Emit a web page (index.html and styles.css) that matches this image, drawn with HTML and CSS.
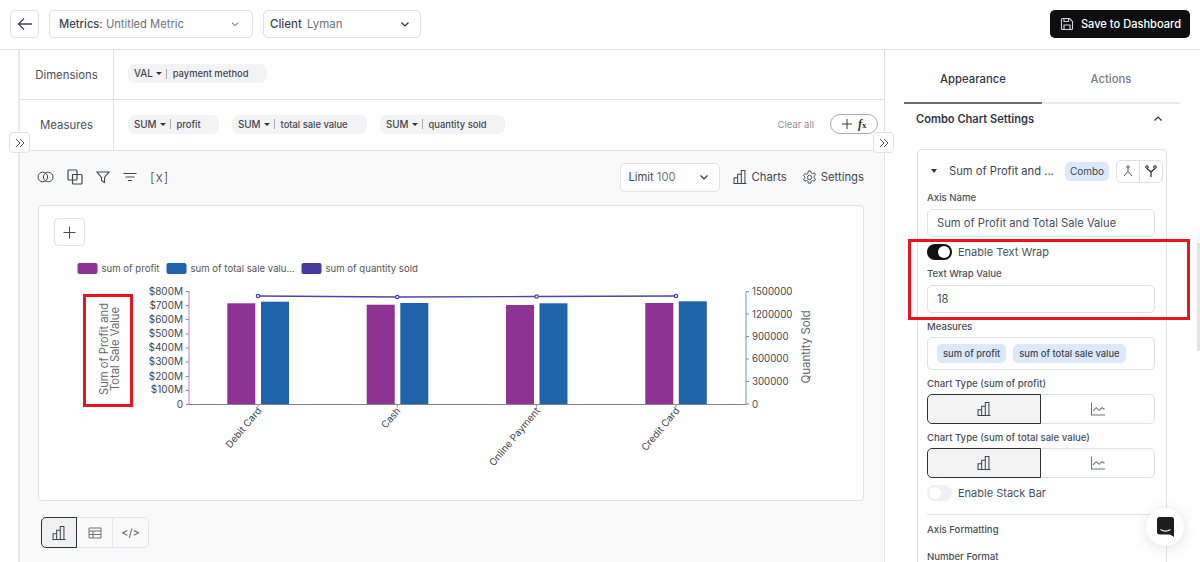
FILE: index.html
```html
<!DOCTYPE html>
<html lang="en">
<head>
<meta charset="utf-8">
<title>Metric editor</title>
<link rel="stylesheet" href="styles.css">
</head>
<body>
<svg class="sprite" width="0" height="0" aria-hidden="true">
  <symbol id="bars" viewBox="1.500 1.500 13.500 13.500"><path d="M2 14.500h12.500M2.500 14.500V9h3.500v5.500M6 14.500V5.500h3.500v9M9.500 14.500V2h3.500v12.500" fill="none" stroke="currentColor" stroke-width="1"/></symbol>
  <symbol id="line" viewBox="1.500 1.500 13.500 13.500"><path d="M2 2v12h13M3.500 10l3-3 3 2.500 2.500-2.500 2.500 1.500" fill="none" stroke="currentColor" stroke-width="1"/></symbol>
  <symbol id="dbl" viewBox="0 0 12 12"><path d="M2 2l4 4-4 4M6 2l4 4-4 4" fill="none" stroke="currentColor" stroke-width="1"/></symbol>
  <symbol id="chev" viewBox="0 0 12 12"><path d="M2.500 4.500L6 8l3.500-3.500" fill="none" stroke="currentColor" stroke-width="1.200"/></symbol>
</svg>

<header class="topbar">
  <button class="btn-back"><svg width="16" height="14" viewBox="0 0 16 14"><path d="M15 7H1.500M7 1.500L1.500 7 7 12.500" fill="none" stroke="#3f4652" stroke-width="1.300"/></svg></button>
  <div class="select select-metric"><span><b>Metrics:</b> <i>Untitled Metric</i></span><svg class="chev-sm"><use href="#chev"/></svg></div>
  <div class="select select-client"><span><b>Client</b> <i>Lyman</i></span><svg class="chev-md"><use href="#chev"/></svg></div>
  <button class="btn-save"><svg width="14" height="14" viewBox="0 0 14 14"><path d="M1.500 2.500a1 1 0 0 1 1-1h7l3 3v7a1 1 0 0 1-1 1h-9a1 1 0 0 1-1-1zM4 12.500V8h6v4.500M4 1.500v3h4.500v-3" fill="none" stroke="#d6d6d6" stroke-width="1.100"/></svg>Save to Dashboard</button>
</header>

<main class="layout">
  <section class="editor">
    <div class="shelf shelf-dim">
      <div class="shelf-label">Dimensions</div>
      <div class="shelf-body">
        <span class="pill pill-dim"><b>VAL</b><em></em><u></u>payment method</span>
      </div>
    </div>
    <div class="shelf shelf-mea">
      <div class="shelf-label">Measures</div>
      <div class="shelf-body">
        <span class="pill pill-a"><b>SUM</b><em></em><u></u>profit</span>
        <span class="pill pill-b"><b>SUM</b><em></em><u></u>total sale value</span>
        <span class="pill pill-c"><b>SUM</b><em></em><u></u>quantity sold</span>
        <span class="clear">Clear all</span>
        <span class="fx"><svg width="12" height="12" viewBox="0 0 12 12"><path d="M6 1v10M1 6h10" stroke="#444" stroke-width="1.100"/></svg><span class="fx-t">f<small>x</small></span></span>
      </div>
    </div>

    <div class="workspace">
      <div class="tools">
        <div class="tool-icons">
          <svg width="17" height="12" viewBox="0 0 17 12"><circle cx="5.800" cy="6" r="4.800" fill="none" stroke="#3f4652"/><circle cx="11.200" cy="6" r="4.800" fill="none" stroke="#3f4652"/></svg>
          <svg width="16" height="16" viewBox="0 0 16 16"><path d="M1 2a1 1 0 0 1 1-1h7a1 1 0 0 1 1 1v8a1 1 0 0 1-1 1H2a1 1 0 0 1-1-1zM5.500 5.500H14a1 1 0 0 1 1 1V14a1 1 0 0 1-1 1H6.500a1 1 0 0 1-1-1z" fill="none" stroke="#3f4652" stroke-width="1.200"/></svg>
          <svg width="14" height="13" viewBox="0 0 14 13"><path d="M1 1h12L8.500 6.500V11.500L5.500 9.500V6.500z" fill="none" stroke="#3f4652" stroke-width="1.100"/></svg>
          <svg width="14" height="10" viewBox="0 0 14 10"><path d="M.5 1.500h13M2.500 5h9M5 8.500h4" stroke="#3f4652" stroke-width="1"/></svg>
          <span class="var">[x]</span>
        </div>
        <div class="tool-right">
          <div class="limit"><span>Limit <i>100</i></span><svg class="chev-md"><use href="#chev"/></svg></div>
          <span class="tool-link"><svg class="ic14"><use href="#bars"/></svg>Charts</span>
          <span class="tool-link"><svg width="15" height="15" viewBox="0 0 16 16"><path d="M6.700 1h2.600l.4 2 1.500.8 1.900-.7 1.300 2.300-1.500 1.300v1.600l1.500 1.300-1.300 2.300-1.900-.7-1.500.8-.4 2H6.700l-.4-2-1.500-.8-1.900.7-1.300-2.300 1.500-1.300V7.400L1.600 6.100l1.300-2.300 1.900.7 1.500-.8z" fill="none" stroke="#3f4652" stroke-width="1"/><circle cx="8" cy="8" r="2.300" fill="none" stroke="#3f4652"/></svg>Settings</span>
        </div>
      </div>

      <div class="chart-card">
        <button class="btn-add"><svg width="13" height="13" viewBox="0 0 13 13"><path d="M6.500 .5v12M.5 6.500h12" stroke="#4a505a" stroke-width="1.100"/></svg></button>
        <svg class="chart" viewBox="39 206 824 293" width="824" height="293">
          <g class="legend">
            <rect x="77.500" y="263" width="20" height="11" rx="2" fill="#8e3394"/><text x="101.500" y="272">sum of profit</text>
            <rect x="166.500" y="263" width="20" height="11" rx="2" fill="#1f63ab"/><text x="190.500" y="272">sum of total sale valu...</text>
            <rect x="301.500" y="263" width="20" height="11" rx="2" fill="#463a9f"/><text x="325.500" y="272">sum of quantity sold</text>
          </g>
          <g class="ticks-l">
            <text x="183" y="294.500">$800M</text><text x="183" y="308.500">$700M</text><text x="183" y="322.500">$600M</text><text x="183" y="337">$500M</text><text x="183" y="351">$400M</text><text x="183" y="365">$300M</text><text x="183" y="379.500">$200M</text><text x="183" y="393">$100M</text><text x="183" y="407.500">0</text>
          </g>
          <path d="M186 291.500h3M186 305.500h3M186 319.500h3M186 334h3M186 348h3M186 362h3M186 376.500h3M186 390.500h3M186 404.500h3" stroke="#a768ac" stroke-width="1"/>
          <path d="M189 291v114" stroke="#c79aca" stroke-width="1.200"/>
          <g fill="#8e3394"><rect x="227.300" y="303.300" width="28" height="101"/><rect x="366.700" y="304.700" width="28" height="99.600"/><rect x="506" y="305" width="28" height="99.300"/><rect x="645.300" y="303" width="28" height="101.300"/></g>
          <g fill="#1f63ab"><rect x="261" y="301.700" width="28" height="102.600"/><rect x="400.300" y="303" width="28" height="101.300"/><rect x="539.500" y="303.300" width="28" height="101"/><rect x="678.800" y="301.300" width="28" height="103"/></g>
          <path d="M189 404.500h557" stroke="#85808f" stroke-width="1"/>
          <path d="M258 404.500v3M397.300 404.500v3M536.500 404.500v3M676 404.500v3" stroke="#999" stroke-width="1"/>
          <path d="M258 296l139.300 1 139.300-.5L676 296" fill="none" stroke="#4f45a5" stroke-width="1.400"/>
          <g fill="#fff" stroke="#463a9f" stroke-width="1.200"><circle cx="258" cy="296" r="1.700"/><circle cx="397.300" cy="297" r="1.700"/><circle cx="536.600" cy="296.500" r="1.700"/><circle cx="676" cy="296" r="1.700"/></g>
          <path d="M746 291.500v113" stroke="#87aacb" stroke-width="1.200"/>
          <path d="M746 291.700h3M746 314h3M746 336.500h3M746 359h3M746 381.500h3M746 404h3" stroke="#5f90bf" stroke-width="1"/>
          <g class="ticks-r">
            <text x="752" y="295">1500000</text><text x="752" y="317.500">1200000</text><text x="752" y="340">900000</text><text x="752" y="362">600000</text><text x="752" y="385">300000</text><text x="752" y="407.500">0</text>
          </g>
          <g class="cats">
            <text transform="translate(262 411) rotate(-50)">Debit Card</text>
            <text transform="translate(401 411) rotate(-50)">Cash</text>
            <text transform="translate(540.500 411) rotate(-50)">Online Payment</text>
            <text transform="translate(680 411) rotate(-50)">Credit Card</text>
          </g>
          <g class="axis-title">
            <text transform="translate(107.500 349) rotate(-90)">Sum of Profit and</text>
            <text transform="translate(118.500 349) rotate(-90)">Total Sale Value</text>
            <text class="qty" transform="translate(810 347) rotate(-90)">Quantity Sold</text>
          </g>
        </svg>
      </div>

      <div class="viewtabs">
        <span class="vt vt-on"><svg class="ic14"><use href="#bars"/></svg></span>
        <span class="vt"><svg width="14" height="12" viewBox="0 0 14 12"><path d="M1 1h12v10H1zM1 4h12M1 7.500h12M5 4v7" fill="none" stroke="#6d727b"/></svg></span>
        <span class="vt vt-code">&lt;/&gt;</span>
      </div>
    </div>
  </section>

  <aside class="panel">
    <div class="tabs"><span class="tab tab-on">Appearance</span><span class="tab">Actions</span></div>
    <div class="sec-head"><span>Combo Chart Settings</span><svg class="chev-up"><use href="#chev"/></svg></div>
    <div class="series">
      <div class="series-head">
        <em class="caret"></em>
        <span class="series-name">Sum of Profit and ...</span>
        <span class="badge">Combo</span>
        <span class="axis-btns">
          <span><svg width="12" height="12" viewBox="0 0 12 12"><circle cx="6" cy="2" r="1.200" fill="none" stroke="#555"/><path d="M6 3.500v3M6 6.500L2 11M6 6.500l4 4.500" fill="none" stroke="#555"/></svg></span>
          <span><svg width="12" height="12" viewBox="0 0 12 12"><circle cx="2" cy="2" r="1.300" fill="none" stroke="#222"/><circle cx="10" cy="2" r="1.300" fill="none" stroke="#222"/><path d="M2 3.500L6 7l4-3.500M6 7v5" fill="none" stroke="#222" stroke-width="1.200"/></svg></span>
        </span>
      </div>
      <label class="lbl lbl-axis">Axis Name</label>
      <div class="input">Sum of Profit and Total Sale Value</div>
      <div class="toggle-row tr-wrap"><span class="toggle on"></span>Enable Text Wrap</div>
      <label class="lbl lbl-wrap">Text Wrap Value</label>
      <div class="input">18</div>
      <label class="lbl lbl-mea">Measures</label>
      <div class="chips"><span class="chip">sum of profit</span><span class="chip">sum of total sale value</span></div>
      <label class="lbl lbl-ct1">Chart Type (sum of profit)</label>
      <div class="seg"><span class="seg-on"><svg class="ic14"><use href="#bars"/></svg></span><span><svg class="ic14 dim"><use href="#line"/></svg></span></div>
      <label class="lbl lbl-ct2">Chart Type (sum of total sale value)</label>
      <div class="seg"><span class="seg-on"><svg class="ic14"><use href="#bars"/></svg></span><span><svg class="ic14 dim"><use href="#line"/></svg></span></div>
      <div class="toggle-row tr-stack"><span class="toggle"></span>Enable Stack Bar</div>
      <hr class="rule">
      <div class="lbl-strong lbl-fmt">Axis Formatting</div>
      <div class="lbl-strong lbl-num">Number Format</div>
    </div>
  </aside>
</main>

<button class="collapse collapse-l"><svg width="12" height="12"><use href="#dbl"/></svg></button>
<button class="collapse collapse-r"><svg width="12" height="12"><use href="#dbl"/></svg></button>
<div class="mark mark-axis"></div>
<div class="mark mark-wrap"></div>
<div class="scroll-thumb"></div>
<button class="chat"><svg width="17" height="20" viewBox="0 0 17 20"><path d="M2.500 0h12A2.500 2.500 0 0 1 17 2.500V20l-4-2.500H2.500A2.500 2.500 0 0 1 0 15V2.500A2.500 2.500 0 0 1 2.500 0z" fill="#1d1d1f"/><path d="M3.500 12.500c3 2 7 2 10 0" fill="none" stroke="#fff" stroke-width="1.100"/></svg></button>
</body>
</html>
```
FILE: styles.css
```css
* { box-sizing: border-box; }
html, body { margin: 0; height: 562px; overflow: hidden; }
body { position: relative; background: #fff; font-family: Inter, "Liberation Sans", sans-serif; color: #3f4652; font-size: 12px; }
button { font: inherit; padding: 0; cursor: pointer; }
i, em { font-style: normal; }
.sprite { position: absolute; }

/* top bar */
.topbar { height: 50px; display: flex; align-items: center; gap: 10px; padding: 0 10px 1px 10px; border-bottom: 1px solid #dfe1e5; }
.btn-back { width: 29px; height: 28px; background: #fff; border: 1px solid #dfe1e5; border-radius: 5px; display: flex; align-items: center; justify-content: center; }
.select { height: 28px; display: flex; align-items: center; justify-content: space-between; background: #fff; border: 1px solid #dfe1e5; border-radius: 5px; font-size: 11.500px; }
.select b { font-weight: 500; color: #3f4652; }
.select i { color: #6d727b; }
.select-metric { width: 204px; padding: 0 10px 0 9px; }
.select-metric span { font-size: 11.200px; }
.select-client { width: 158px; padding: 0 9px 0 6px; }
.select-client b { margin-right: 2px; }
.chev-sm { width: 10px; height: 10px; color: #444; margin-right: 2px; }
.chev-md { width: 12px; height: 12px; color: #333; }
.btn-save { margin-left: auto; width: 140px; height: 28px; background: #0e0e10; border: 0; border-radius: 5px; color: #fff; font-weight: 500; font-size: 11.100px; display: flex; align-items: center; justify-content: flex-end; padding-right: 9px; gap: 7px; white-space: nowrap; }

/* layout */
.layout { height: 512px; display: flex; }
.editor { width: 867px; margin-left: 18px; border-left: 2px solid #e6e7ea; border-right: 1px solid #dfe1e5; display: flex; flex-direction: column; }
.shelf { display: flex; border-bottom: 1px solid #dfe1e5; }
.shelf-dim { height: 50px; }
.shelf-mea { height: 51px; }
.shelf-label { width: 94px; border-right: 1px solid #dfe1e5; display: flex; align-items: center; justify-content: center; font-size: 11.400px; color: #4a505a; }
.shelf-body { flex: 1; display: flex; align-items: center; padding: 0 6px 2px 14px; }
.pill { height: 19px; border-radius: 7px; background: #f3f3f5; display: inline-flex; align-items: center; padding-left: 6px; font-size: 9.400px; font-weight: 500; color: #3f4652; margin-right: 13px; white-space: nowrap; }
.pill b { font-weight: 500; font-size: 9.800px; }
.pill em { width: 0; height: 0; border: 3px solid transparent; border-top: 3px solid #333; border-bottom: 0; margin: 0 4px 0 3px; }
.pill u { width: 1px; height: 10px; background: #aaa; margin-right: 6px; }
.pill-dim { width: 139px; }
.pill-a { width: 91px; }
.pill-b { width: 135px; }
.pill-c { width: 125px; }
.clear { margin-left: auto; color: #8d9097; font-size: 9.500px; margin-right: 16px; }
.fx { width: 48px; height: 20px; border: 1px solid #a9acb2; border-radius: 10px; display: inline-flex; align-items: center; gap: 5px; padding-left: 10px; }
.fx-t { font: italic 700 12px "Liberation Serif", serif; color: #333; }
.fx-t small { font-size: 9px; font-style: normal; }

.workspace { flex: 1; background: #f9f9fa; padding: 0 20px 0 18px; min-height: 0; }
.tools { height: 54px; display: flex; align-items: center; justify-content: space-between; padding-bottom: 2px; }
.tool-icons { display: flex; align-items: center; gap: 13px; margin-left: -1px; }
.var { font-family: Inter, "Liberation Sans", sans-serif; font-weight: 300; font-size: 13px; letter-spacing: 1.200px; }
.tool-right { display: flex; align-items: center; }
.limit { width: 100px; height: 29px; border: 1px solid #dfe1e5; border-radius: 5px; background: #fff; display: flex; align-items: center; justify-content: space-between; padding: 0 9px 0 7px; font-size: 11.200px; margin-right: 13px; }
.limit i { color: #6d727b; }
.tool-link { display: flex; align-items: center; gap: 4px; font-size: 11.300px; margin-right: 15px; }
.tool-link:last-child { margin-right: 0; }
.ic14 { width: 14px; height: 14px; color: #3f4652; display: block; }
.ic14.dim { color: #6d727b; }

.chart-card { position: relative; width: 826px; height: 296px; background: #fff; border: 1px solid #dfe1e5; border-radius: 4px; }
.chart { display: block; }
.btn-add { position: absolute; left: 15px; top: 12px; width: 31px; height: 28px; background: #fff; border: 1px solid #dfe1e5; border-radius: 4px; display: flex; align-items: center; justify-content: center; }
.chart text { font-family: Inter, "Liberation Sans", sans-serif; fill: #45484f; }
.chart .legend text { font-size: 9.600px; fill: #555; }
.chart .ticks-l text { font-size: 10px; text-anchor: end; }
.chart .ticks-r text { font-size: 9.700px; }
.chart .cats text { font-size: 9.800px; text-anchor: end; fill: #3f4248; }
.chart .axis-title text { font-size: 11.200px; text-anchor: middle; fill: #666a72; }
.chart .axis-title .qty { font-size: 11.500px; }

.viewtabs { margin: 16px 0 0 3px; width: 108px; height: 31px; display: flex; border: 1px solid #e4e5e8; border-radius: 5px; }
.vt { flex: 1; display: flex; align-items: center; justify-content: center; border-right: 1px solid #e4e5e8; }
.vt:last-child { border-right: 0; }
.vt-on { background: #f1f1f2; border: 1px solid #2f3238; border-radius: 5px 0 0 5px; margin: -1px 0 -1px -1px; flex: none; width: 36px; }
.vt-code { font-size: 11px; color: #555; }

/* right panel */
.panel { flex: 1; padding-left: 19px; min-width: 0; }
.tabs { width: 276px; height: 54px; display: flex; }
.tab { flex: 1; display: flex; align-items: center; justify-content: center; font-size: 11.300px; font-weight: 500; color: #757a83; border-bottom: 2px solid #e9eaec; padding-top: 6px; }
.tab-on { color: #2f3744; border-bottom-color: #6b6e74; }
.sec-head { width: 262px; margin: 0 0 0 12px; height: 30px; display: flex; align-items: center; justify-content: space-between; font-size: 11.100px; font-weight: 600; color: #2f3744; padding: 0 14px 0 0; }
.chev-up { width: 12px; height: 12px; color: #333; transform: rotate(180deg); }
.series { width: 250px; margin: 15px 0 0 13px; border: 1px solid #dfe1e5; border-bottom: 0; border-radius: 5px 5px 0 0; padding: 9px 10px 0 9px; height: 420px; overflow: hidden; }
.series-head { display: flex; align-items: center; height: 24px; width: 236px; }
.caret { width: 0; height: 0; border: 3.500px solid transparent; border-top: 4px solid #333; border-bottom: 0; margin: 0 12px 0 4px; }
.series-name { width: 116px; font-size: 11.200px; white-space: nowrap; color: #3f4652; }
.badge { width: 44px; height: 19px; background: #dbe9fb; border-radius: 5px; font-size: 10px; display: flex; align-items: center; justify-content: center; color: #3f4652; }
.axis-btns { margin-left: 7px; width: 47px; height: 23px; border: 1px solid #dfe1e5; border-radius: 5px; display: flex; }
.axis-btns span { flex: 1; display: flex; align-items: center; justify-content: center; }
.axis-btns span:first-child { border-right: 1px solid #dfe1e5; }
.lbl, .lbl-strong { display: block; font-size: 9.600px; font-weight: 500; line-height: 12px; color: #4a505a; }
.lbl-axis { margin-top: 9px; }
.input { width: 228px; height: 28px; margin-top: 5px; background: #fff; border: 1px solid #dfe1e5; border-radius: 5px; display: flex; align-items: center; padding-left: 9px; font-size: 11.200px; color: #4a505a; }
.toggle-row { display: flex; align-items: center; gap: 6px; font-size: 11px; color: #4a505a; height: 16px; }
.tr-wrap { margin-top: 7px; }
.toggle { width: 25px; height: 16px; border-radius: 8px; background: #f0f0f1; position: relative; display: block; }
.toggle::after { content: ""; position: absolute; left: 2px; top: 2px; width: 12px; height: 12px; border-radius: 50%; background: #fff; }
.toggle.on { background: #111; }
.toggle.on::after { left: 11px; }
.lbl-wrap { margin-top: 8px; }
.lbl-mea { margin-top: 8px; }
.chips { width: 228px; height: 33px; margin-top: 4px; border: 1px solid #dfe1e5; border-radius: 5px; display: flex; align-items: center; gap: 7px; padding-left: 9px; }
.chip { height: 19px; padding: 0 6px; background: #dbe9fb; border-radius: 5px; font-size: 9.400px; font-weight: 500; display: flex; align-items: center; white-space: nowrap; color: #3f4652; }
.lbl-ct1 { margin-top: 8px; }
.lbl-ct2 { margin-top: 8px; }
.seg { width: 228px; height: 30px; margin-top: 4px; border: 1px solid #dfe1e5; border-radius: 5px; display: flex; }
.seg span { flex: 1; display: flex; align-items: center; justify-content: center; }
.seg .seg-on { flex: none; width: 114px; margin: -1px 0 -1px -1px; background: #f3f3f4; border: 1px solid #2f3238; border-radius: 5px 0 0 5px; }
.tr-stack { margin-top: 7px; }
.rule { width: 228px; margin: 13px 0 0; border: 0; border-top: 1px solid #e2e3e6; }
.lbl-fmt { margin-top: 9px; }
.lbl-num { margin-top: 15px; }

/* overlays */
.collapse { position: absolute; width: 21px; height: 21px; background: #fff; border: 1px solid #e2e3e6; border-radius: 4px; display: flex; align-items: center; justify-content: center; color: #555; }
.collapse-l { left: 9px; top: 132px; }
.collapse-r { left: 873px; top: 132px; }
.mark { position: absolute; border: 3px solid #e8141f; pointer-events: none; }
.mark-axis { left: 83px; top: 294px; width: 50px; height: 113px; }
.mark-wrap { left: 908px; top: 239px; width: 282px; height: 81px; }
.scroll-thumb { position: absolute; left: 1197px; top: 243px; width: 3px; height: 108px; background: #e3e4e6; }
.chat { position: absolute; left: 1146px; top: 508px; width: 38px; height: 38px; border: 0; border-radius: 50%; background: #fff; box-shadow: 0 2px 14px rgba(0,0,0,.12); display: flex; align-items: center; justify-content: center; }
```
